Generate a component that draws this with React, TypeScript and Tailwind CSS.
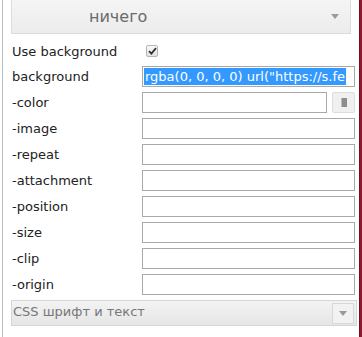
import React from 'react';

const rows = ['-image', '-repeat', '-attachment', '-position', '-size', '-clip', '-origin'];

const Caret = () => (
  <svg width="8" height="5" viewBox="0 0 8 5" className="block">
    <path d="M0 0 H8 L4 5 Z" fill="#9a9a9a" />
  </svg>
);

export default function App() {
  return (
    <div className="w-[362px] h-[337px] flex bg-white overflow-hidden text-[#222]" style={{ fontFamily: '"DejaVu Sans", Verdana, sans-serif' }}>
      <div className="w-[2px] shrink-0" />
      <div className="flex-1 border-l border-[#bdbdbd] flex flex-col">
        {/* Top select */}
        <div className="ml-[8px] mr-[8px] h-[35px] -mt-[1px] border border-t-0 border-[#dcdcdc] bg-gradient-to-b from-[#f5f5f5] to-[#ececec] flex items-center">
          <span className="ml-[77px] text-[16px] text-[#6a6a6a] leading-none pt-[1px]">ничего</span>
          <span className="ml-auto mr-[11px]"><Caret /></span>
        </div>

        {/* Use background */}
        <div className="flex items-center h-[14px] mt-[10px] ml-[9px]">
          <span className="w-[134px] text-[13px] leading-none">Use background</span>
          <span className="w-[12px] h-[12px] border border-[#b5b5b5] rounded-[2px] bg-gradient-to-b from-[#fafafa] to-[#e2e2e2] flex items-center justify-center">
            <svg width="9" height="8" viewBox="0 0 9 8">
              <path d="M1 4.2 L3.4 6.6 L8 1.2" stroke="#333" strokeWidth="1.8" fill="none" />
            </svg>
          </span>
        </div>

        {/* background */}
        <div className="flex items-center mt-[8px] ml-[9px] h-[21px]">
          <span className="w-[130px] text-[13px] leading-none">background</span>
          <div className="w-[213px] h-[21px] border border-[#a9a9a9] overflow-hidden flex items-center pl-[1px]">
            <span className="bg-[#3399ff] text-white text-[13px] leading-[17px] whitespace-nowrap px-[1px]">rgba(0, 0, 0, 0) url("https://s.fe</span>
          </div>
        </div>

        {/* color */}
        <div className="flex items-center mt-[5px] ml-[9px] h-[21px]">
          <span className="w-[130px] text-[13px] leading-none">-color</span>
          <div className="w-[185px] h-[21px] border border-[#a9a9a9]" />
          <div className="ml-[5px] w-[23px] h-[21px] border border-[#dcdcdc] rounded-[2px] bg-[#f0f0f0] flex items-center justify-center">
            <div className="w-[6px] h-[9px] bg-[#8e8e8e] border-l border-[#bbb]" />
          </div>
        </div>

        {rows.map((label) => (
          <div key={label} className="flex items-center mt-[5px] ml-[9px] h-[21px]">
            <span className="w-[130px] text-[13px] leading-none">{label}</span>
            <div className="w-[213px] h-[21px] border border-[#a9a9a9]" />
          </div>
        ))}

        {/* Bottom select */}
        <div className="ml-[8px] mr-[2px] mt-[5px] h-[26px] border border-[#d6d6d6] bg-gradient-to-b from-[#f3f3f3] to-[#e6e6e6] flex items-center">
          <span className="ml-[1px] text-[13px] text-[#777] leading-none -mt-[3px]">CSS шрифт и текст</span>
          <div className="ml-auto mr-[2px] w-[22px] h-[21px] border border-[#d8d8d8] bg-[#f2f2f2] flex items-center justify-center">
            <Caret />
          </div>
        </div>
      </div>
      <div className="w-[3px] shrink-0 bg-[#8e1b2b] border-l border-[#6e1020]" />
    </div>
  );
}
